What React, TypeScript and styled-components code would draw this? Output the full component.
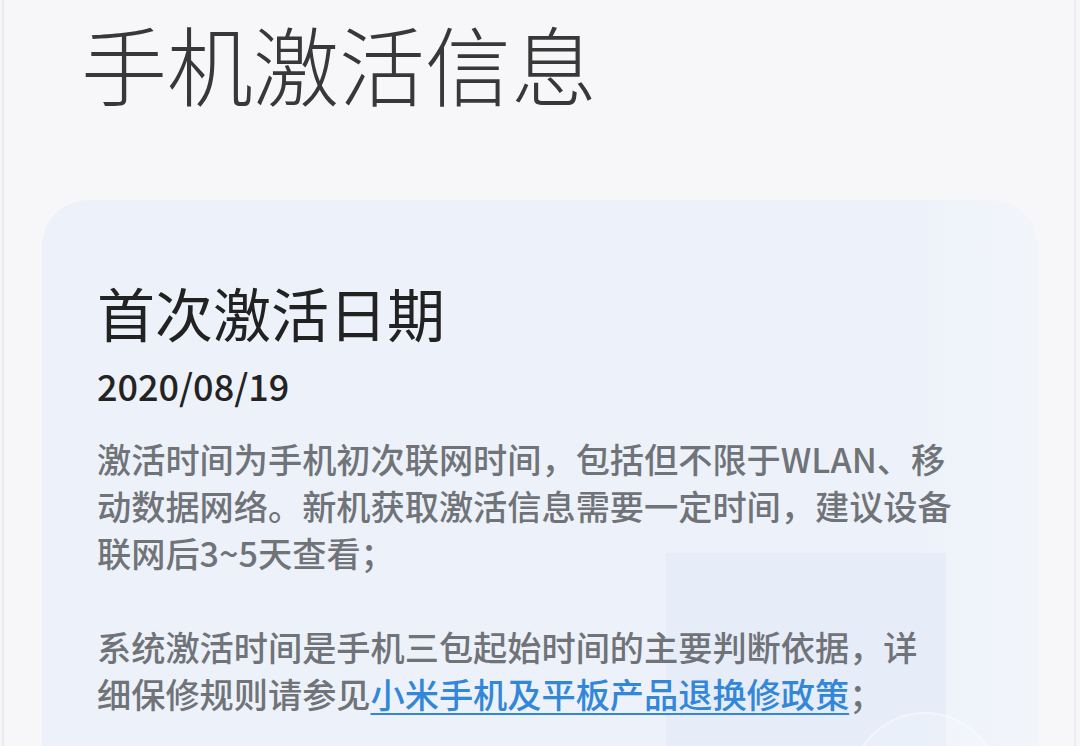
import styled, { createGlobalStyle } from 'styled-components';

const GlobalStyle = createGlobalStyle`
  html, body {
    margin: 0;
    padding: 0;
    background: #f7f7f9;
  }
  body {
    font-family: "Noto Sans CJK SC", "Noto Sans", sans-serif;
  }
`;

const Page = styled.div`
  width: 1074px;
  height: 746px;
  margin-left: 2px;
  overflow: hidden;
  box-sizing: border-box;
  border-left: 2px solid #e9e9ec;
  border-right: 2px solid #ececef;
`;

const Title = styled.h1`
  margin: 0;
  padding: 0 0 0 77px;
  font-size: 86px;
  line-height: 126px;
  font-weight: 300;
  color: #383838;
`;

const Card = styled.section`
  position: relative;
  margin: 74px 0 0 38px;
  width: 996px;
  height: 620px;
  box-sizing: border-box;
  padding: 70px 0 0 55px;
  border-radius: 46px;
  background: linear-gradient(90deg, #edf2fa 0%, #edf2fa 88%, #f2f5fa 100%);
  overflow: hidden;
`;

const Panel = styled.div`
  position: absolute;
  left: 624px;
  top: 353px;
  width: 280px;
  height: 300px;
  background: rgba(214, 226, 244, 0.3);
`;

const Ring = styled.div`
  position: absolute;
  left: 808px;
  top: 512px;
  width: 146px;
  height: 146px;
  border-radius: 50%;
  background: rgba(255, 255, 255, 0.18);
  border: 2px solid rgba(255, 255, 255, 0.35);
`;

const Content = styled.div`
  position: relative;
`;

const Heading = styled.h2`
  margin: 0;
  font-size: 58px;
  line-height: 84px;
  font-weight: 400;
  color: #222;
`;

const DateText = styled.div`
  margin-top: 5px;
  font-size: 36px;
  line-height: 52px;
  font-weight: 500;
  color: #232323;
`;

const Paragraph = styled.p<{ $first?: boolean }>`
  margin: ${(p) => (p.$first ? '24px' : '47px')} 0 0;
  font-size: 34.2px;
  line-height: 47px;
  font-weight: 500;
  color: #707378;
  white-space: nowrap;
`;

const PolicyLink = styled.a`
  color: #3287d8;
  text-decoration: underline;
  text-decoration-thickness: 2px;
  text-underline-offset: 5px;
`;

export default function App() {
  return (
    <>
      <GlobalStyle />
      <Page>
        <Title>手机激活信息</Title>
        <Card>
          <Panel />
          <Ring />
          <Content>
            <Heading>首次激活日期</Heading>
            <DateText>2020/08/19</DateText>
            <Paragraph $first>
              激活时间为手机初次联网时间，包括但不限于WLAN、移
              <br />
              动数据网络。新机获取激活信息需要一定时间，建议设备
              <br />
              联网后3~5天查看；
            </Paragraph>
            <Paragraph>
              系统激活时间是手机三包起始时间的主要判断依据，详
              <br />
              细保修规则请参见<PolicyLink href="#">小米手机及平板产品退换修政策</PolicyLink>；
            </Paragraph>
          </Content>
        </Card>
      </Page>
    </>
  );
}
